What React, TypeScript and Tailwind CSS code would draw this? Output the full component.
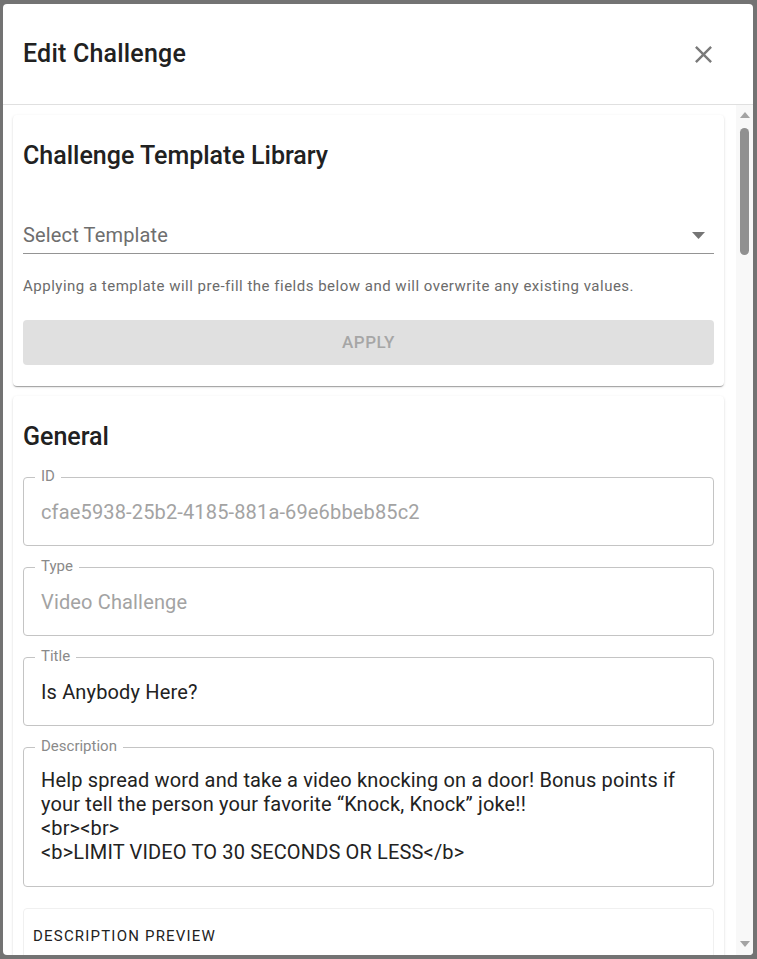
import { ReactNode } from "react";

const CARD_SHADOW =
  "shadow-[0px_2px_1px_-1px_rgba(0,0,0,0.2),0px_1px_1px_0px_rgba(0,0,0,0.14),0px_1px_3px_0px_rgba(0,0,0,0.12)]";

interface IOutlinedField {
  label: string;
  children: ReactNode;
  disabled?: boolean;
  multiline?: boolean;
}

const OutlinedField = ({ label, children, disabled, multiline }: IOutlinedField) => {
  return (
    <div
      className={`relative rounded-[4px] border border-[#c4c4c4] px-[17px] ${
        multiline ? "h-[140px] pt-[20px]" : "h-[69px] flex items-center"
      }`}
    >
      <span className="absolute -top-[10px] left-[11px] bg-white px-[6px] text-[15px] leading-[16px] text-[#8a8a8a]">
        {label}
      </span>
      <div
        className={`w-full text-[20px] leading-[24px] tracking-[0.15px] ${
          disabled ? "text-[#a3a3a3]" : "text-[#222222]"
        } ${multiline ? "whitespace-pre-line" : ""}`}
      >
        {children}
      </div>
    </div>
  );
};

const FakeScrollbar = () => (
  <div className="w-[17px] shrink-0 bg-[#f8f8f8] flex flex-col items-center">
    <div className="h-[17px] w-full flex items-center justify-center pt-[3px]">
      <svg width="10" height="6" viewBox="0 0 10 6">
        <polygon points="5,0 10,6 0,6" fill="#a3a3a3" />
      </svg>
    </div>
    <div className="mt-[6px] h-[127px] w-[9px] rounded-full bg-[#909090]" />
    <div className="flex-1" />
    <div className="h-[17px] w-full flex items-center justify-center pb-[6px]">
      <svg width="10" height="6" viewBox="0 0 10 6">
        <polygon points="0,0 10,0 5,6" fill="#a3a3a3" />
      </svg>
    </div>
  </div>
);

const App = () => {
  return (
    <div
      className="h-[959px] w-[757px] bg-[#737373] pt-[4px] pl-[3px] pr-[4px] pb-[4px] overflow-hidden"
      style={{ fontFamily: "Roboto, 'Noto Sans', sans-serif" }}
    >
      <div className="h-[951px] w-[750px] bg-white rounded-[4px] flex flex-col overflow-hidden">
        {/* header */}
        <div className="h-[101px] shrink-0 flex items-center justify-between pl-[20px] pr-[35px] border-b border-[#e0e0e0]">
          <h2 className="text-[25px] leading-[32px] font-medium tracking-[0.2px] text-[#212121]">
            Edit Challenge
          </h2>
          <svg width="29" height="29" viewBox="0 0 24 24" fill="#7a7a7a">
            <path d="M19 6.41 17.59 5 12 10.59 6.41 5 5 6.41 10.59 12 5 17.59 6.41 19 12 13.41 17.59 19 19 17.59 13.41 12z" />
          </svg>
        </div>

        {/* body */}
        <div className="flex-1 min-h-0 flex">
          <div className="flex-1 min-w-0 overflow-hidden pl-[10px] pr-[12px] py-[10px] flex flex-col gap-[10px]">
            {/* template library */}
            <section className={`shrink-0 rounded-[4px] bg-white px-[10px] pt-[24px] pb-[21px] ${CARD_SHADOW}`}>
              <h3 className="text-[25px] leading-[34px] font-medium text-[#212121]">
                Challenge Template Library
              </h3>
              <div className="mt-[50px] flex items-start justify-between border-b border-[#949494] pb-[6px]">
                <span className="text-[20px] leading-[24px] tracking-[0.15px] text-[#6e6e6e]">Select Template</span>
                <svg width="13" height="7" viewBox="0 0 13 7" className="mt-[9px] mr-[9px]">
                  <polygon points="0,0 13,0 6.5,7" fill="#757575" />
                </svg>
              </div>
              <p className="mt-[22px] text-[15px] leading-[20px] tracking-[0.5px] text-[#6b6b6b]">
                Applying a template will pre-fill the fields below and will overwrite any existing values.
              </p>
              <button className="mt-[24px] h-[45px] w-full rounded-[4px] bg-[#e0e0e0] text-[17px] font-medium tracking-[0.5px] text-[#a6a6a6]">
                APPLY
              </button>
            </section>

            {/* general */}
            <section className={`shrink-0 rounded-[4px] bg-white px-[10px] pt-[24px] pb-[20px] ${CARD_SHADOW}`}>
              <h3 className="text-[25px] leading-[34px] font-medium text-[#212121]">General</h3>
              <div className="mt-[23px] flex flex-col gap-[21px]">
                <OutlinedField label="ID" disabled>
                  cfae5938-25b2-4185-881a-69e6bbeb85c2
                </OutlinedField>
                <OutlinedField label="Type" disabled>
                  Video Challenge
                </OutlinedField>
                <OutlinedField label="Title">Is Anybody Here?</OutlinedField>
                <OutlinedField label="Description" multiline>
                  {"Help spread word and take a video knocking on a door! Bonus points if\nyour tell the person your favorite \u201cKnock, Knock\u201d joke!!\n<br><br>\n<b>LIMIT VIDEO TO 30 SECONDS OR LESS</b>"}
                </OutlinedField>
                <div className="rounded-[4px] border border-[#f0f0f0] px-[9px] pt-[15px] pb-[20px]">
                  <span className="text-[15px] leading-[20px] tracking-[1.2px] text-[#222222]">
                    DESCRIPTION PREVIEW
                  </span>
                </div>
              </div>
            </section>
          </div>
          <FakeScrollbar />
        </div>
      </div>
    </div>
  );
};

export default App;
